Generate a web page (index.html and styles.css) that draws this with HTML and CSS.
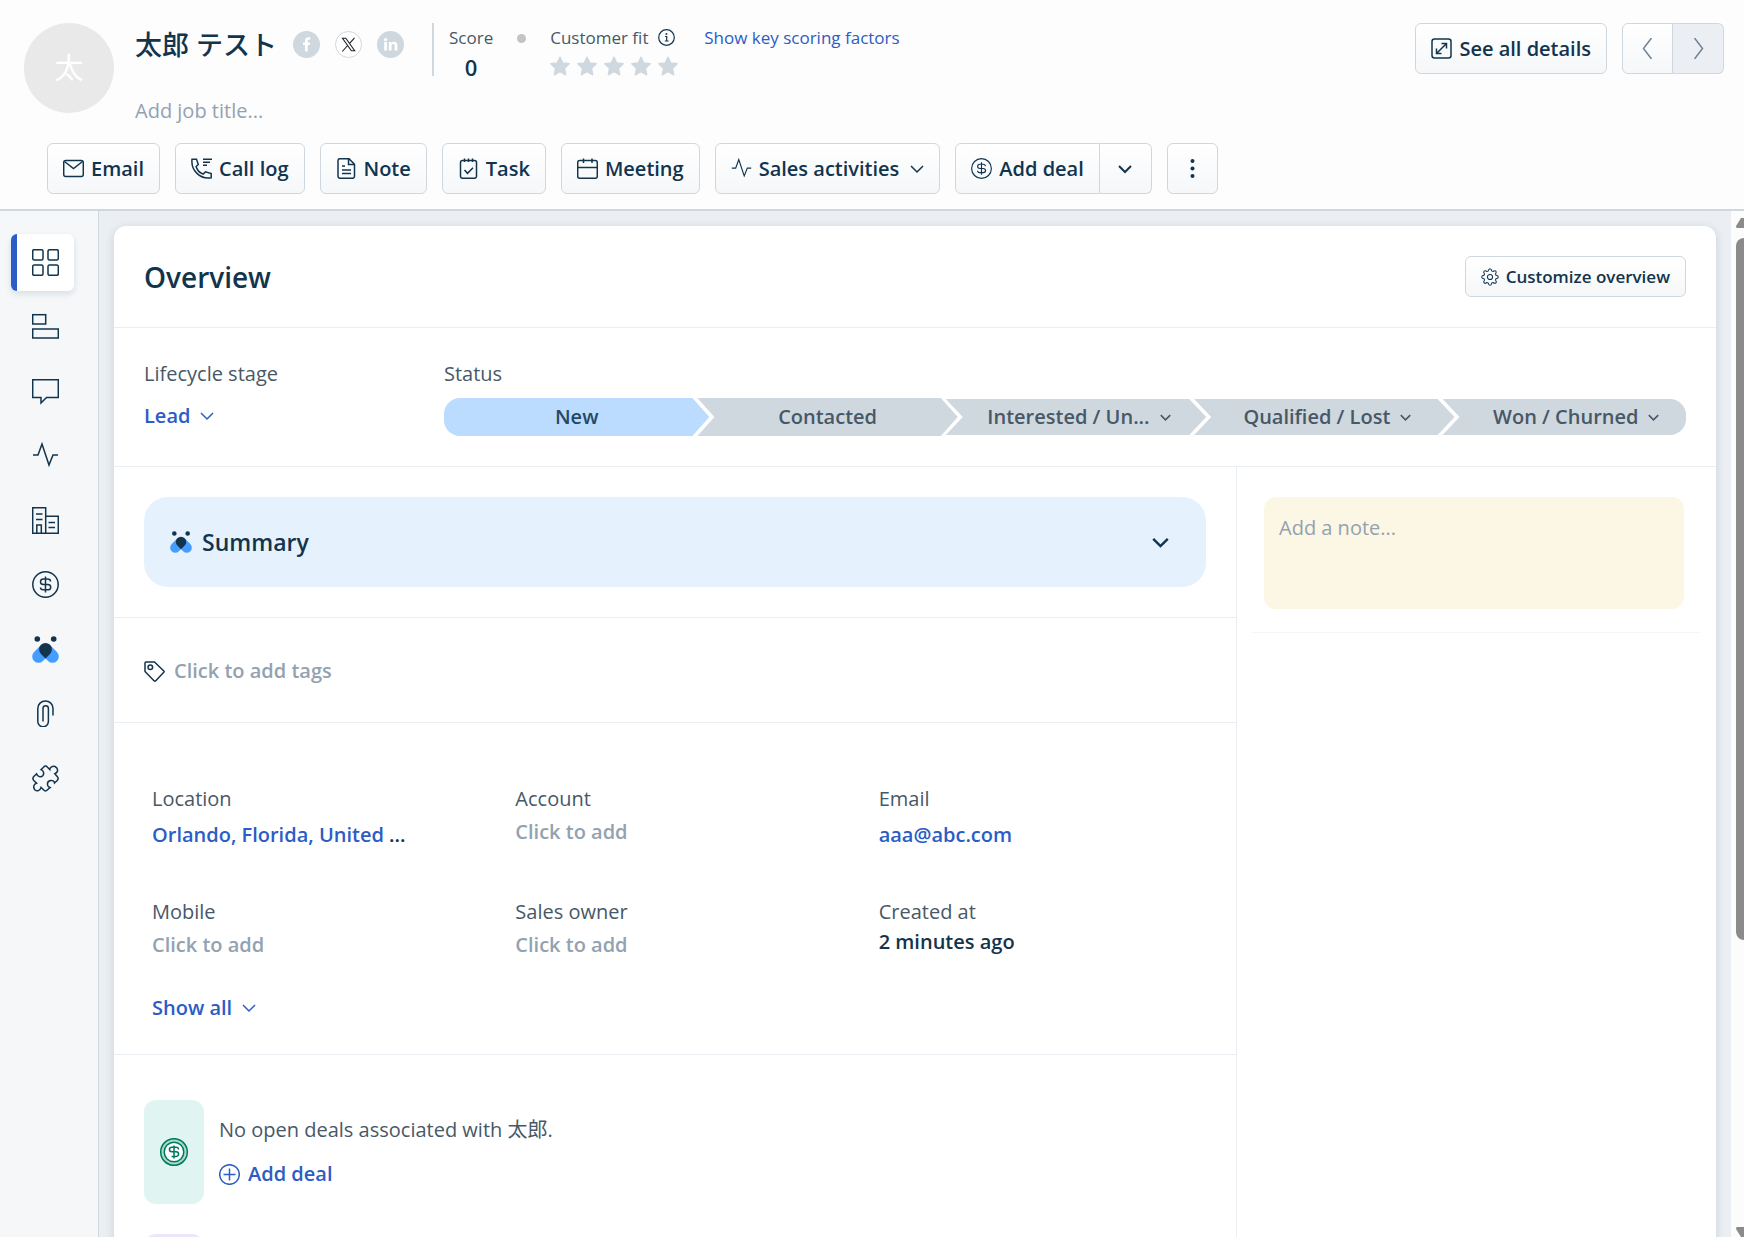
FILE: index.html
```
<!DOCTYPE html>
<html lang="en">
<head>
    <meta charset="UTF-8">
    <meta name="viewport" content="width=device-width, initial-scale=1.0">
    <title>太郎 テスト - Contact</title>
    <link rel="stylesheet" href="styles.css">
</head>
<body>
    <!-- Shared icons -->
    <svg class="sprite" aria-hidden="true">
        <symbol id="chevron" viewBox="0 0 14 14"><path d="M1 4l6 6 6-6"/></symbol>
        <symbol id="pulse" viewBox="0 0 27 27"><path d="M1 13h5l4-11 7 21 4-10h5"/></symbol>
        <symbol id="dollar" viewBox="0 0 27 27"><circle cx="13.500" cy="13.500" r="12.700"/><path d="M13.500 5.500v16M18.500 10.500c0-2-1-2.500-3-2.500h-4c-2 0-3 1-3 2.700s1 2.800 3 2.800h4.200c2 0 3 1 3 2.700s-1 2.600-3 2.600h-4.500c-2 0-2.700-.8-2.700-2.300"/></symbol>
        <symbol id="freddy" viewBox="0 0 27 27">
            <path d="M6.500 20.500l5.500-5.500M20.500 20.500l-5.500-5.500" stroke="#459eff" stroke-width="12.600" stroke-linecap="round"/>
            <path d="M13.500 22.500l-4.500-4.600a6.400 6.400 0 1 1 9 0z" fill="#12344d" stroke="none"/>
            <circle cx="5.300" cy="3" r="2.800" fill="#12344d" stroke="none"/>
            <circle cx="21.700" cy="3" r="2.800" fill="#12344d" stroke="none"/>
        </symbol>
        <symbol id="star" viewBox="0 0 20 20"><path d="M10 1l2.800 5.900 6.500.8-4.700 4.600 1.200 6.700-5.800-3.200-5.800 3.200 1.200-6.700-4.700-4.600 6.500-.8z" fill="#cfd7df" stroke="#cfd7df" stroke-width="1.200" stroke-linejoin="round"/></symbol>
    </svg>

    <header class="header">
        <div class="profile">
            <div class="avatar">太</div>
            <div class="identity">
                <div class="identity-top">
                    <h1 class="name">太郎 テスト</h1>
                    <div class="socials">
                        <a href="#" class="social" aria-label="Facebook"><svg viewBox="0 0 27 27"><circle cx="13.500" cy="13.500" r="13.500" fill="#cfd7df" stroke="none"/><path d="M12 20.500v-6.500h-2v-2.500h2V9.700c0-2.200 1.200-3.400 3.200-3.400h2v2.400h-1.300c-.9 0-1.200.5-1.200 1.200v1.600h2.400l-.4 2.500h-2v6.500z" fill="#fff" stroke="none"/></svg></a>
                        <a href="#" class="social" aria-label="X"><svg viewBox="0 0 27 27"><circle cx="13.500" cy="13.500" r="13" fill="#fff" stroke="#cfd7df" stroke-width="1"/><path d="M7.500 7.300h3.300l8.900 12.500h-3.300zM19.500 6.800l-5.300 6M12.600 14.500l-5.300 6" stroke="#222" stroke-width="1.100"/></svg></a>
                        <a href="#" class="social" aria-label="LinkedIn"><svg viewBox="0 0 27 27"><circle cx="13.500" cy="13.500" r="13.500" fill="#cfd7df" stroke="none"/><circle cx="8.600" cy="8.600" r="1.700" fill="#fff" stroke="none"/><path d="M7.200 11h2.800v8.500H7.200zM11.800 11h2.600v1.200c.6-.9 1.500-1.400 2.700-1.400 2.500 0 3.300 1.500 3.300 4v4.700h-2.800v-4.200c0-1.300-.2-2.200-1.400-2.200s-1.600.9-1.600 2.200v4.200h-2.800z" fill="#fff" stroke="none"/></svg></a>
                    </div>
                    <div class="scoring">
                        <div class="score">
                            <span class="score-label">Score</span>
                            <strong>0</strong>
                        </div>
                        <span class="dot"></span>
                        <div class="fit">
                            <span class="score-label">Customer fit
                                <svg class="info" viewBox="0 0 17 17"><circle cx="8.500" cy="8.500" r="7.800"/><path d="M7 7.500h1.700v4.300M6.800 12h3.800"/><circle cx="8.400" cy="5" r=".4"/></svg>
                            </span>
                            <span class="stars"><svg><use href="#star"/></svg><svg><use href="#star"/></svg><svg><use href="#star"/></svg><svg><use href="#star"/></svg><svg><use href="#star"/></svg></span>
                        </div>
                        <a href="#" class="factors">Show key scoring factors</a>
                    </div>
                </div>
                <a href="#" class="job">Add job title...</a>
            </div>
            <div class="header-right">
                <button class="btn"><svg viewBox="0 0 21 21"><rect x="1" y="1" width="19" height="19" rx="2.500"/><path d="M6 15l9-9M10.500 5.500h5v5M5.500 10.500v5h5"/></svg>See all details</button>
                <div class="btn-group pager">
                    <button class="btn" aria-label="Previous"><svg viewBox="0 0 21 21"><path d="M14.500 0l-8 10.500 8 10.500"/></svg></button>
                    <button class="btn disabled" aria-label="Next"><svg viewBox="0 0 21 21"><path d="M6.500 0l8 10.500-8 10.500"/></svg></button>
                </div>
            </div>
        </div>

        <div class="actions">
            <button class="btn"><svg viewBox="0 0 21 21"><rect x=".700" y="2.500" width="19.600" height="16" rx="2"/><path d="M1.500 3.500l9 7 9-7"/></svg>Email</button>
            <button class="btn"><svg viewBox="0 0 21 21"><path d="M1 1.200h4.500l1.800 5.300-2.200 2c.8 3.200 3.700 6.200 7 7.600l2.400-2.200 5.700 1.600v4.300C9 21.500-.2 12.500 1 1.200zM12 1.200h9M12 4.200h7M12 7.200h4"/></svg>Call log</button>
            <button class="btn"><svg viewBox="0 0 21 21"><path d="M4 .700h9l5.500 5.500v12.100q0 2-2 2H4q-2 0-2-2V2.700q0-2 2-2zM12.500 1v5.500h5.500M6 8h3M6 12h9M6 15.500h9"/></svg>Note</button>
            <button class="btn"><svg viewBox="0 0 21 21"><rect x="2.500" y="2.500" width="16" height="17.800" rx="2"/><path d="M6.500.5V4M10.500.5V4M14.500.5V4M6.500 12l3 3.300 5.500-5.500"/></svg>Task</button>
            <button class="btn"><svg viewBox="0 0 21 21"><rect x=".700" y="2.500" width="19.600" height="17.800" rx="2"/><path d="M.700 9.500h19.600M6.500.5v4.500M15 .5v4.500"/></svg>Meeting</button>
            <button class="btn"><svg><use href="#pulse"/></svg>Sales activities<svg class="chev"><use href="#chevron"/></svg></button>
            <div class="btn-group">
                <button class="btn"><svg><use href="#dollar"/></svg>Add deal</button>
                <button class="btn more-deals" aria-label="More deal options"><svg class="chev"><use href="#chevron"/></svg></button>
            </div>
            <button class="btn kebab" aria-label="More actions"><svg viewBox="0 0 21 21"><circle cx="10.500" cy="3" r="2"/><circle cx="10.500" cy="10.500" r="2"/><circle cx="10.500" cy="18" r="2"/></svg></button>
        </div>
    </header>

    <div class="page">
        <nav class="sidebar">
            <a href="#" class="active" aria-label="Overview"><svg viewBox="0 0 27 27"><rect x=".700" y=".700" width="10.300" height="10.300" rx="1.500"/><rect x="16" y=".700" width="10.300" height="10.300" rx="1.500"/><rect x=".700" y="16" width="10.300" height="10.300" rx="1.500"/><rect x="16" y="16" width="10.300" height="10.300" rx="1.500"/></svg></a>
            <a href="#" aria-label="Details"><svg viewBox="0 0 27 27"><rect x=".700" y="1.700" width="13" height="9.300"/><rect x=".700" y="16" width="25.600" height="9"/></svg></a>
            <a href="#" aria-label="Conversations"><svg viewBox="0 0 27 27"><path d="M.700 1.700h25.600v17.800H14.500L9 25v-5.500H.700z"/></svg></a>
            <a href="#" aria-label="Activities"><svg><use href="#pulse"/></svg></a>
            <a href="#" aria-label="Account"><svg viewBox="0 0 27 27"><path d="M.700 26.300V.700h13v25.600zM13.700 9.300h12.600v17H13.700M4 7h6.500M4 12.500h6.500M4.800 26v-8h4.500v8M16.500 15.500h6.500M16.500 20.500h6.500"/></svg></a>
            <a href="#" aria-label="Deals"><svg><use href="#dollar"/></svg></a>
            <a href="#" aria-label="Freddy"><svg><use href="#freddy"/></svg></a>
            <a href="#" aria-label="Files"><svg viewBox="0 0 27 27"><path d="M21 15.500V8.500a7.500 7.500 0 0 0-15.200 0v13a5.300 5.300 0 0 0 10.600 0V8.500a2.700 2.700 0 0 0-5.400 0v13"/></svg></a>
            <a href="#" aria-label="Apps"><svg viewBox="0 0 27 27"><path d="M11.500 2.200Q13.500 0 15.500 2.200L17.800 4.600C18 2 20.500.9 23 1.500C26 3 27 7 22.800 8.800L25.200 11.500Q27 13.500 25.200 15.500L22.500 18C22 14 15 15 15.500 19.500C15.500 21.500 17.500 22.500 18 22.600L15.500 24.800Q13.500 27 11.500 24.800L9 22.500C8 26 5 26.500 3 25C.8 22.500 1.500 19 4.500 18.200L1.800 15.500Q0 13.500 1.800 11.500L4.500 8.800C5.500 12 9 12.500 10.800 10.800C12.500 8.500 11.500 5.500 9 4.600Z"/></svg></a>
        </nav>

        <main class="content">
            <section class="card">
                <div class="card-head">
                    <h2>Overview</h2>
                    <button class="btn btn-small"><svg viewBox="0 0 21 21"><circle cx="10.500" cy="10.500" r="3"/><path d="M8.500 3.500Q8.800.8 10.500.8t2 2.700l1.500.6q2.200-1.700 3.300-.5t-.4 3.400l.6 1.500q2.700.3 2.700 2t-2.700 2l-.6 1.500q1.700 2.200.5 3.300t-3.400-.4l-1.500.6q-.3 2.700-2 2.700t-2-2.700l-1.500-.6q-2.200 1.700-3.300.5t.4-3.400l-.6-1.500Q.8 12.200.8 10.500t2.700-2l.6-1.500q-1.700-2.200-.5-3.300t3.400.4z"/></svg>Customize overview</button>
                </div>

                <div class="lifecycle">
                    <div>
                        <div class="label">Lifecycle stage</div>
                        <button class="link-btn">Lead<svg class="chev"><use href="#chevron"/></svg></button>
                    </div>
                    <div class="status">
                        <div class="label">Status</div>
                        <div class="stages">
                            <button class="stage current">New</button>
                            <button class="stage">Contacted</button>
                            <button class="stage menu">Interested / Un...<svg class="chev"><use href="#chevron"/></svg></button>
                            <button class="stage menu">Qualified / Lost<svg class="chev"><use href="#chevron"/></svg></button>
                            <button class="stage menu">Won / Churned<svg class="chev"><use href="#chevron"/></svg></button>
                        </div>
                    </div>
                </div>

                <div class="columns">
                    <div class="left">
                        <div class="block">
                            <button class="summary"><svg><use href="#freddy"/></svg><span>Summary</span><svg class="chev"><use href="#chevron"/></svg></button>
                        </div>
                        <div class="block tags">
                            <svg viewBox="0 0 21 21"><path d="M1 2q0-1 1-1h8.500l9.300 9q.6.600 0 1.200l-8 8.500q-1 .8-1.800 0l-9-9.200z"/><circle cx="6.300" cy="6.300" r="2.300"/></svg>
                            <a href="#" class="muted">Click to add tags</a>
                        </div>
                        <div class="block fields-block">
                            <dl class="fields">
                                <div><dt>Location</dt><dd class="tall"><a href="#">Orlando, Florida, United</a> ...</dd></div>
                                <div><dt>Account</dt><dd><a href="#" class="muted">Click to add</a></dd></div>
                                <div><dt>Email</dt><dd class="tall"><a href="#">aaa@abc.com</a></dd></div>
                                <div><dt>Mobile</dt><dd><a href="#" class="muted">Click to add</a></dd></div>
                                <div><dt>Sales owner</dt><dd><a href="#" class="muted">Click to add</a></dd></div>
                                <div><dt>Created at</dt><dd class="short">2 minutes ago</dd></div>
                            </dl>
                            <button class="link-btn">Show all<svg class="chev"><use href="#chevron"/></svg></button>
                        </div>
                        <div class="deals">
                            <div class="deal">
                                <div class="deal-icon"><svg viewBox="0 0 28 28"><circle cx="14" cy="14" r="11.700" stroke="#a5dccb" stroke-width="3"/><circle cx="14" cy="14" r="13.300"/><circle cx="14" cy="14" r="9.800" fill="#fff"/><path d="M14 7.500v13M18.500 11.500c0-1.500-.8-2.200-2.300-2.200h-4.300c-1.700 0-2.500.8-2.500 2.300s.8 2.200 2.500 2.200h4.200c1.700 0 2.500.8 2.500 2.300s-.8 2.300-2.500 2.300h-4.500"/></svg></div>
                                <div class="deal-text">
                                    <p>No open deals associated with 太郎.</p>
                                    <button class="link-btn"><svg viewBox="0 0 21 21"><circle cx="10.500" cy="10.500" r="9.800"/><path d="M10.500 4.500v12M4.500 10.500h12"/></svg>Add deal</button>
                                </div>
                            </div>
                            <div class="deal">
                                <div class="deal-icon purple"></div>
                            </div>
                        </div>
                    </div>
                    <aside class="right">
                        <textarea class="note" placeholder="Add a note..." aria-label="Add a note"></textarea>
                        <hr>
                    </aside>
                </div>
            </section>
        </main>

        <div class="scrollbar" aria-hidden="true">
            <svg viewBox="0 0 8 10"><path d="M0 8L5 0h3v10H1q-1 0-1-2z"/></svg>
            <div class="track"><div class="thumb"></div></div>
            <svg viewBox="0 0 8 10"><path d="M0 2l5 8h3V0H1Q0 0 0 2z"/></svg>
        </div>
    </div>
</body>
</html>
```
FILE: styles.css
```
* {
    box-sizing: border-box;
}

body {
    margin: 0;
    height: 100vh;
    display: flex;
    flex-direction: column;
    overflow: hidden;
    background-color: #fdfdfd;
    color: #12344d;
    font-family: "Open Sans", "Noto Sans CJK JP", sans-serif;
    font-size: 20px;
    line-height: 28px;
}

h1, h2, p, dl, dd {
    margin: 0;
}

a {
    color: #2c5cc5;
    text-decoration: none;
}

button {
    font: inherit;
    font-weight: 600;
    color: inherit;
    cursor: pointer;
}

svg {
    display: block;
    flex: none;
    fill: none;
    stroke: currentColor;
    stroke-width: 1.5px;
}

.sprite {
    position: absolute;
    width: 0;
    height: 0;
}

svg.chev {
    width: 14px;
    height: 14px;
}

/* Buttons */
.btn {
    display: flex;
    align-items: center;
    justify-content: center;
    gap: 7px;
    height: 51px;
    padding: 0 15px;
    border: 1px solid #cfd7df;
    border-radius: 6px;
    background: linear-gradient(#fff, #f5f7f9);
    white-space: nowrap;
}

.btn svg {
    width: 21px;
    height: 21px;
}

.btn svg.chev {
    width: 14px;
    height: 14px;
    margin-left: 4px;
}

.btn-group {
    display: flex;
}

.btn-group .btn:first-child {
    border-radius: 6px 0 0 6px;
}

.btn-group .btn:last-child {
    border-left: none;
    border-radius: 0 6px 6px 0;
}

.btn-group .more-deals {
    width: 52px;
}

.btn.more-deals svg.chev {
    margin: 0;
    stroke-width: 2px;
}

.kebab {
    width: 51px;
}

.kebab svg {
    fill: currentColor;
    stroke: none;
}

.btn-small {
    height: 41px;
    font-size: 17px;
}

.btn-small svg {
    width: 18px;
    height: 18px;
    stroke-width: 1.2px;
}

.link-btn {
    display: flex;
    align-items: center;
    gap: 10px;
    padding: 0;
    border: none;
    background: none;
    color: #2c5cc5;
}

/* Header */
.header {
    padding: 23px 20px 15px 24px;
    border-bottom: 2px solid #cfd7df;
}

.profile {
    display: flex;
    height: 120px;
}

.avatar {
    display: flex;
    align-items: center;
    justify-content: center;
    width: 90px;
    height: 90px;
    border-radius: 50%;
    background-color: #e9e9e9;
    color: #fff;
    font-size: 29px;
}

.identity {
    flex: 1;
    margin-left: 21px;
}

.identity-top {
    display: flex;
    height: 53px;
}

.name {
    font-size: 27px;
    font-weight: 500;
    line-height: 44px;
    white-space: nowrap;
}

.socials {
    display: flex;
    gap: 15px;
    margin: 8px 28px 0 16px;
}

.social svg {
    width: 27px;
    height: 27px;
}

.scoring {
    display: flex;
    border-left: 2px solid #cfd7df;
    padding-left: 15px;
    font-size: 17px;
}

.score {
    display: flex;
    flex-direction: column;
    align-items: center;
}

.score-label {
    display: flex;
    gap: 10px;
    line-height: 30px;
    color: #475867;
}

.score strong {
    font-size: 22px;
    font-weight: 600;
}

.dot {
    width: 9px;
    height: 9px;
    margin: 11px 24px 0;
    border-radius: 50%;
    background-color: #c4c4c4;
}

.info {
    width: 17px;
    height: 17px;
    margin-top: 6px;
    color: #12344d;
    stroke-width: 1.2px;
}

.stars {
    display: flex;
    gap: 7px;
    margin-top: 3px;
}

.stars svg {
    width: 20px;
    height: 20px;
}

.factors {
    margin-left: 26px;
    line-height: 30px;
}

.job {
    display: inline-block;
    margin-top: 21px;
    color: #92a2b1;
}

.header-right {
    display: flex;
    align-items: flex-start;
    gap: 15px;
}

.pager .btn {
    width: 51px;
    color: #6f8295;
}

.pager .disabled {
    background: #ebeff3;
}

.actions {
    display: flex;
    gap: 15px;
    margin-left: 23px;
}

/* Page body */
.page {
    flex: 1;
    display: flex;
    min-height: 0;
}

.sidebar {
    display: grid;
    align-content: start;
    grid-auto-rows: 64px 65px;
    width: 99px;
    padding: 23px 24px 0 11px;
    border-right: 1px solid #cfd7df;
    background-color: #f5f7f9;
}

.sidebar a {
    display: flex;
    align-items: center;
    justify-content: center;
    height: 57px;
    border-left: 6px solid transparent;
    border-radius: 6px;
    color: #12344d;
}

.sidebar svg {
    width: 27px;
    height: 27px;
}

.sidebar .active {
    border-color: #2c5cc5;
    background-color: #fff;
    box-shadow: 0 3px 6px rgba(18, 52, 77, 0.12);
}

.content {
    flex: 1;
    min-width: 0;
    padding: 15px 15px 0;
    background-color: #ebeff3;
    overflow: hidden;
}

.card {
    display: flex;
    flex-direction: column;
    min-height: 100%;
    border-radius: 12px 12px 0 0;
    background-color: #fff;
    box-shadow: 0 2px 10px rgba(18, 52, 77, 0.16);
}

.card-head {
    display: flex;
    align-items: center;
    justify-content: space-between;
    padding: 30px;
    border-bottom: 1px solid #ebeff3;
}

.card-head h2 {
    font-size: 28px;
    font-weight: 600;
}

.lifecycle {
    display: grid;
    grid-template-columns: 300px 1fr;
    padding: 32px 30px 30px;
    border-bottom: 1px solid #ebeff3;
}

.label, .fields dt {
    color: #475867;
}

.lifecycle .link-btn {
    margin-top: 14px;
}

.stages {
    display: flex;
    align-items: center;
    margin-top: 10px;
}

/* each stage points into the notch of the next one */
.stage {
    flex: none;
    display: flex;
    align-items: center;
    justify-content: center;
    gap: 10px;
    width: calc(20% + 12px);
    height: 38px;
    margin-right: -12px;
    padding: 0;
    border: none;
    background-color: #cfd7df;
    color: #475867;
    font-weight: 600;
    white-space: nowrap;
    clip-path: polygon(0 0, calc(100% - 17px) 0, 100% 50%, calc(100% - 17px) 100%, 0 100%, 17px 50%);
}

.stage.menu {
    height: 36px;
    padding-left: 6px;
}

.stage .chev {
    width: 11px;
    height: 11px;
    stroke-width: 2px;
}

.stage:first-child {
    width: calc(20% + 17px);
    border-radius: 16px 0 0 16px;
    background-color: #bbdcfe;
    color: #264966;
    clip-path: polygon(0 0, calc(100% - 17px) 0, 100% 50%, calc(100% - 17px) 100%, 0 100%);
}

.stage.menu:last-child {
    flex: 1;
    margin-right: 0;
    padding-left: 24px;
    border-radius: 0 16px 16px 0;
    clip-path: polygon(0 0, 100% 0, 100% 100%, 0 100%, 17px 50%);
}

.columns {
    flex: 1;
    display: grid;
    grid-template-columns: 1fr 479px;
}

.left {
    border-right: 1px solid #ebeff3;
}

.block {
    padding: 30px;
    border-bottom: 1px solid #ebeff3;
}

.summary {
    display: flex;
    align-items: center;
    gap: 10px;
    width: 100%;
    height: 90px;
    padding: 0 37px 0 26px;
    border: none;
    border-radius: 24px;
    background-color: #e5f2fd;
    font-size: 23px;
    text-align: left;
}

.summary svg {
    width: 22px;
    height: 22px;
}

.summary span {
    flex: 1;
}

.summary .chev {
    width: 17px;
    height: 17px;
    stroke-width: 2px;
}

.tags {
    display: flex;
    align-items: center;
    gap: 9px;
    padding: 39px 30px 37px;
}

.tags svg {
    width: 21px;
    height: 21px;
}

.muted {
    color: #92a2b1;
    font-weight: 600;
}

.fields-block {
    padding: 60px 0 32px 38px;
}

.fields {
    display: grid;
    grid-template-columns: repeat(3, 1fr);
    gap: 41px 6px;
    margin-bottom: 32px;
}

.fields dt {
    line-height: 32px;
}

.fields dd {
    line-height: 34px;
    font-weight: 600;
}

.fields dd.tall {
    line-height: 40px;
}

.fields dd.short {
    line-height: 28px;
}

.deals {
    display: flex;
    flex-direction: column;
    gap: 30px;
    padding: 45px 30px 0;
}

.deal {
    display: flex;
    gap: 15px;
}

.deal-icon {
    display: flex;
    align-items: center;
    justify-content: center;
    width: 60px;
    height: 104px;
    border-radius: 12px;
    background-color: #e0f5f1;
    color: #00795b;
}

.deal-icon svg {
    width: 28px;
    height: 28px;
}

.deal-icon.purple {
    background-color: #ede5fc;
}

.deal-text {
    padding-top: 16px;
    color: #475867;
}

.deal-text .link-btn {
    gap: 8px;
    margin-top: 16px;
}

.deal-text svg {
    width: 21px;
    height: 21px;
}

.right {
    padding: 30px 16px 0 15px;
}

.note {
    display: block;
    width: calc(100% - 28px);
    height: 112px;
    margin-left: 12px;
    padding: 17px 15px;
    border: none;
    border-radius: 12px;
    background-color: #fcf6e4;
    color: #12344d;
    font: inherit;
    resize: none;
}

.note::placeholder {
    color: #92a2b1;
}

.right hr {
    margin: 23px 0 0;
    border: none;
    border-top: 1px solid #f3f5f7;
}

/* Scrollbar */
.scrollbar {
    display: flex;
    flex-direction: column;
    align-items: flex-end;
    width: 13px;
    padding-top: 7px;
    background-color: #fcfcfc;
}

.scrollbar svg {
    width: 8px;
    height: 10px;
    fill: #8b8b8b;
    stroke: none;
}

.track {
    flex: 1;
    width: 8px;
    padding-top: 10px;
}

.thumb {
    height: 71%;
    border-radius: 8px 0 0 8px;
    background-color: #8b8b8b;
}
```
